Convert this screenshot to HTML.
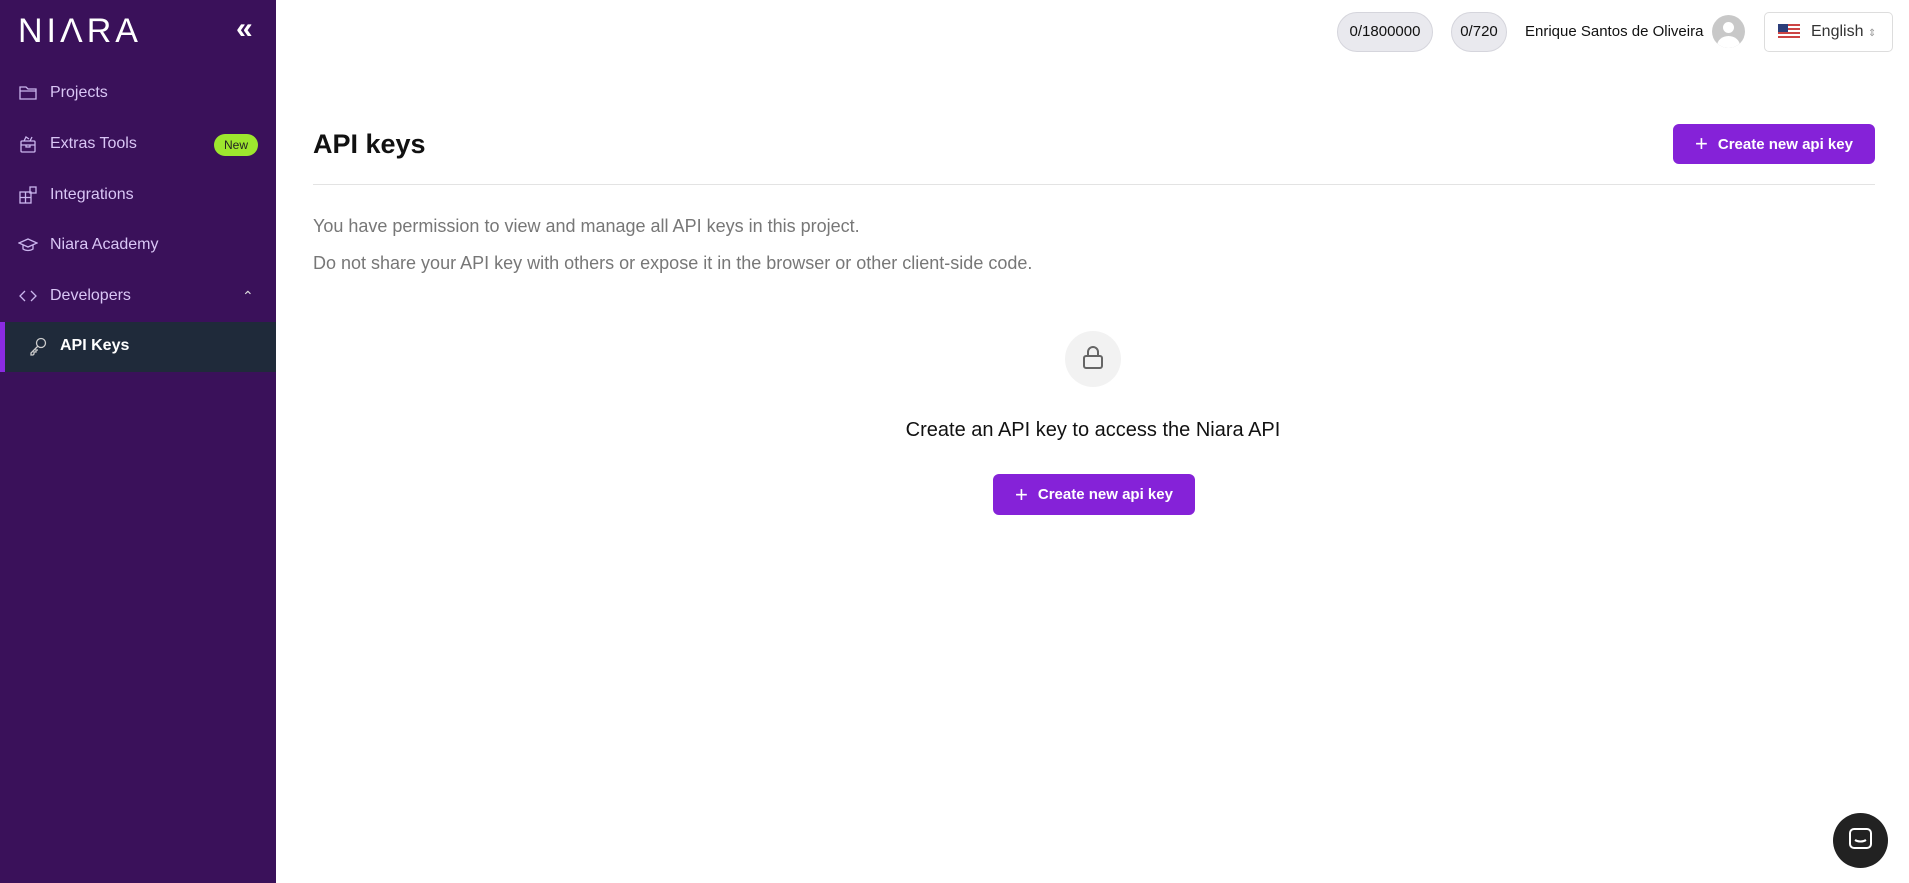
<!DOCTYPE html>
<html><head><meta charset="utf-8"><style>
*{box-sizing:border-box;margin:0;padding:0}
body{width:1909px;height:883px;overflow:hidden;font-family:"Liberation Sans",sans-serif;background:#fff;position:relative}
.sb{position:absolute;left:0;top:0;width:276px;height:883px;background:#3a115a}
.logo{position:absolute;left:18px;top:12px;color:#fff;font-size:34px;letter-spacing:4px;font-weight:300}
.it{position:absolute;left:18px;color:#d9c6f5;font-size:16px;display:flex;align-items:center;gap:12px}
.it svg{width:20px;height:20px}
.new{position:absolute;left:214px;top:134px;width:44px;height:22px;border-radius:11px;background:#9de62e;color:#222;font-size:12px;text-align:center;line-height:22px}
.act{position:absolute;left:0;top:322px;width:276px;height:50px;background:#1f2a3a;border-left:5px solid #8a2be2}
.pill{position:absolute;top:12px;height:40px;border-radius:20px;background:#e9e9ee;border:1px solid #d5d5dc;font-size:15px;line-height:38px;text-align:center;color:#111}
.btn{position:absolute;background:#8522d8;color:#fff;font-weight:bold;font-size:15px;border-radius:6px;display:flex;align-items:center;justify-content:center;gap:10px}
</style></head><body>
<div class="sb">
<div class="logo">NIΛRA</div>
<div style="position:absolute;left:236px;top:12px;color:#fff;font-size:30px;font-weight:bold">«</div>
<div class="it" style="top:83px"><svg viewBox="0 0 20 20" fill="none" stroke="#cbb6ee" stroke-width="1.3"><path d="M2 4h6l2 2h8v10H2z M2 8h16"/></svg>Projects</div>
<div class="it" style="top:134px"><svg viewBox="0 0 20 20" fill="none" stroke="#cbb6ee" stroke-width="1.3"><rect x="3" y="7" width="14" height="11" rx="1"/><path d="M3 11h14M8 11v2h4v-2M6 7l2-4 3 2M12 7l2-4"/></svg>Extras Tools</div>
<div class="new">New</div>
<div class="it" style="top:185px"><svg viewBox="0 0 20 20" fill="none" stroke="#cbb6ee" stroke-width="1.3"><rect x="2" y="7" width="11" height="11"/><path d="M2 12.5h11M7.5 7v11"/><rect x="12" y="2" width="6" height="6"/></svg>Integrations</div>
<div class="it" style="top:235px"><svg viewBox="0 0 20 20" fill="none" stroke="#cbb6ee" stroke-width="1.3"><path d="M1 8l9-4 9 4-9 4z M5 10v4c3 2 7 2 10 0v-4"/></svg>Niara Academy</div>
<div class="it" style="top:286px"><svg viewBox="0 0 20 20" fill="none" stroke="#cbb6ee" stroke-width="1.3"><path d="M7 5l-5 5 5 5M13 5l5 5-5 5"/></svg>Developers</div>
<div style="position:absolute;left:242px;top:288px;color:#ddd;font-size:14px">&#8963;</div>
<div class="act"></div>
<div class="it" style="top:336px;left:28px;color:#fff;font-weight:bold"><svg viewBox="0 0 20 20" fill="none" stroke="#ccc" stroke-width="1.3"><circle cx="13" cy="7" r="4.5"/><path d="M10 10l-7 7v2h2l1-1v-2h2v-2h2"/></svg>API Keys</div>
</div>
<div class="pill" style="left:1337px;width:96px">0/1800000</div>
<div class="pill" style="left:1451px;width:56px">0/720</div>
<div style="position:absolute;left:1525px;top:23px;font-size:15px;color:#111">Enrique Santos de Oliveira</div>
<div style="position:absolute;left:1712px;top:15px;width:33px;height:33px;border-radius:50%;background:#c8c8c8;overflow:hidden"><div style="position:absolute;left:11px;top:7px;width:11px;height:11px;border-radius:50%;background:#fff"></div><div style="position:absolute;left:5px;top:21px;width:23px;height:20px;border-radius:50%;background:#fff"></div></div>
<div style="position:absolute;left:1764px;top:12px;width:129px;height:40px;border:1px solid #ddd;border-radius:5px;font-size:16px;color:#333;line-height:38px;padding-left:46px">English <span style="font-size:10px;color:#999">⇕</span></div>
<div style="position:absolute;left:1778px;top:24px;width:22px;height:15px;background:repeating-linear-gradient(#c44 0 2px,#fff 2px 4px)"><div style="width:10px;height:8px;background:#2c3e7a"></div></div>
<div style="position:absolute;left:313px;top:129px;font-size:27px;font-weight:bold;color:#111">API keys</div>
<div class="btn" style="left:1673px;top:124px;width:202px;height:40px"><span style="font-size:22px;font-weight:normal">+</span>Create new api key</div>
<div style="position:absolute;left:313px;top:184px;width:1562px;height:1px;background:#e3e3e3"></div>
<div style="position:absolute;left:313px;top:216px;font-size:18px;color:#777">You have permission to view and manage all API keys in this project.</div>
<div style="position:absolute;left:313px;top:253px;font-size:18px;color:#777">Do not share your API key with others or expose it in the browser or other client-side code.</div>
<div style="position:absolute;left:1065px;top:331px;width:56px;height:56px;border-radius:50%;background:#f2f2f2"></div>
<svg style="position:absolute;left:1081px;top:345px" width="24" height="26" viewBox="0 0 24 26" fill="none" stroke="#666" stroke-width="2"><rect x="3" y="11" width="18" height="12" rx="2"/><path d="M7 11V7a5 5 0 0 1 10 0v4"/></svg>
<div style="position:absolute;left:800px;width:586px;text-align:center;top:419px;font-size:20px;color:#111">Create an API key to access the Niara API</div>
<div class="btn" style="left:993px;top:474px;width:202px;height:41px"><span style="font-size:22px;font-weight:normal">+</span>Create new api key</div>
<div style="position:absolute;left:1833px;top:813px;width:55px;height:55px;border-radius:50%;background:#222"><svg style="position:absolute;left:16px;top:15px" width="23" height="25" viewBox="0 0 23 25" fill="none" stroke="#fff" stroke-width="2"><rect x="1" y="1" width="21" height="19" rx="4"/><path d="M6 12c3 2 8 2 11 0"/></svg></div>
</body></html>
